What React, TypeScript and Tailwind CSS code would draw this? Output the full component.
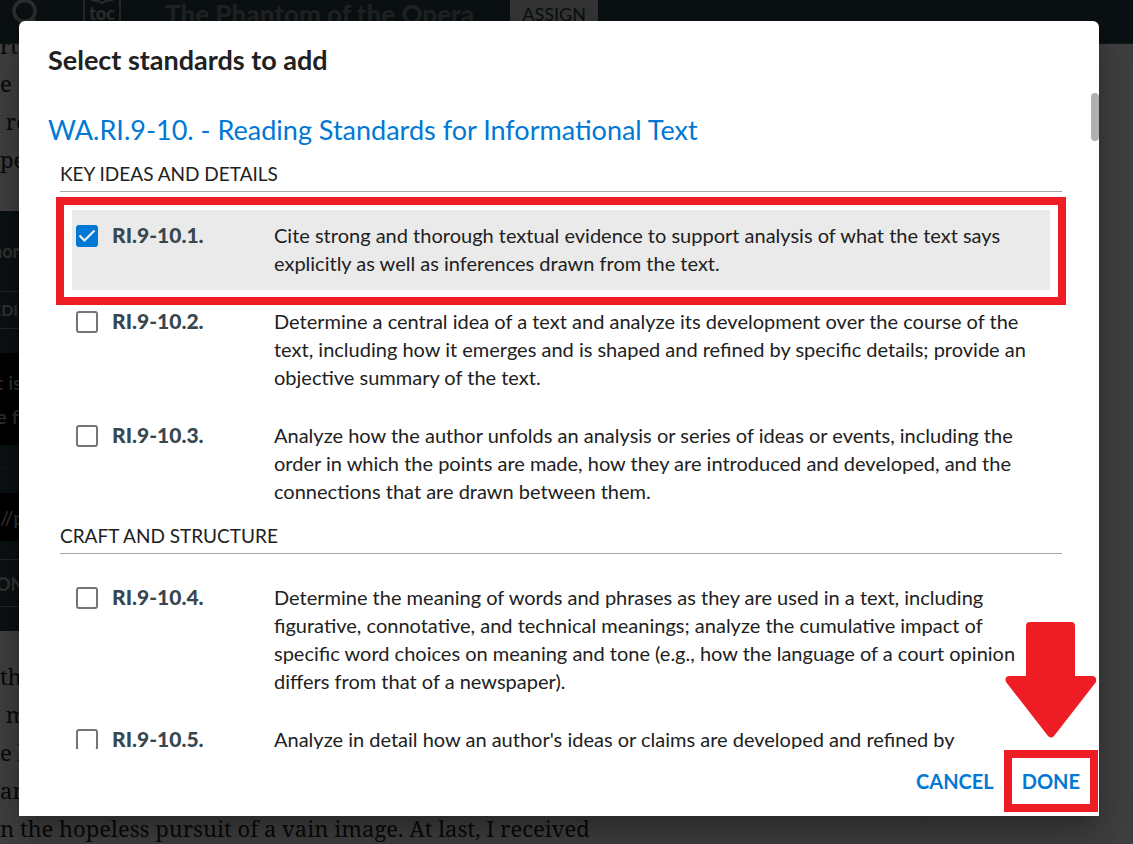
import React, { useState } from "react"

type Standard = {
  id: string
  text: string
}

type Section = {
  title: string
  standards: Standard[]
}

const sections: Section[] = [
  {
    title: "KEY IDEAS AND DETAILS",
    standards: [
      {
        id: "RI.9-10.1.",
        text: "Cite strong and thorough textual evidence to support analysis of what the text says explicitly as well as inferences drawn from the text.",
      },
      {
        id: "RI.9-10.2.",
        text: "Determine a central idea of a text and analyze its development over the course of the text, including how it emerges and is shaped and refined by specific details; provide an objective summary of the text.",
      },
      {
        id: "RI.9-10.3.",
        text: "Analyze how the author unfolds an analysis or series of ideas or events, including the order in which the points are made, how they are introduced and developed, and the connections that are drawn between them.",
      },
    ],
  },
  {
    title: "CRAFT AND STRUCTURE",
    standards: [
      {
        id: "RI.9-10.4.",
        text: "Determine the meaning of words and phrases as they are used in a text, including figurative, connotative, and technical meanings; analyze the cumulative impact of specific word choices on meaning and tone (e.g., how the language of a court opinion differs from that of a newspaper).",
      },
      {
        id: "RI.9-10.5.",
        text: "Analyze in detail how an author's ideas or claims are developed and refined by",
      },
    ],
  },
]

const ReaderPage: React.FC = () => (
  <div className="flex h-full flex-col bg-white">
    <header className="relative z-10 flex h-11 shrink-0 items-start border-b border-[#51626b] bg-[#2f424b] pl-[9px] text-[#b5b5b5]">
      <svg viewBox="0 0 30 30" className="h-[30px] w-[30px]" fill="none" stroke="currentColor" strokeWidth="3.5">
        <circle cx="15.5" cy="11" r="10.5" />
        <path d="M22 18l7 8" strokeWidth="4.5" />
      </svg>
      <div className="ml-11 flex h-7 w-[38px] flex-col items-center border-x-2 border-[#a0a0a0]">
        <svg viewBox="0 0 34 5" className="h-[5px] w-[34px] shrink-0" fill="none" stroke="currentColor" strokeWidth="2">
          <path d="M6 0c4 0 8 1 11 3c3-2 7-3 11-3" />
        </svg>
        <span className="text-lg leading-4 font-black">toc</span>
      </div>
      <h1 className="ml-11 text-[26px] leading-7 font-black text-[#808a8f]">The Phantom of the Opera</h1>
      <button className="ml-9 h-7 w-[88px] bg-[#d8d8d8] text-lg leading-7 font-medium text-[#37474f]">ASSIGN</button>
    </header>
    <main className="min-h-0 w-[923px] flex-1 overflow-hidden border-r border-gray-200 font-['Noto_Serif','Liberation_Serif',serif] text-[22px] leading-[38px] text-[#2b2b2b]">
      <p className="-mt-[18px]">
        rt
        <br />e of
        <br />
        &nbsp;re
        <br />
        pe
      </p>
      <section className="mt-[33px] bg-[#2f424b] font-['Lato',sans-serif] text-lg font-bold text-[#c8c8c8]">
        <p className="-ml-2 h-20 leading-20">nor</p>
        <p className="-ml-2 h-[38px] border-y border-[#a0a0a0] text-base leading-9">EDI</p>
        <div className="mt-6 h-[92px] bg-black pt-3 text-xl leading-[34px] font-medium">
          <p className="-ml-1">t is</p>
          <p className="-ml-1">e fi</p>
        </div>
        <div className="h-6 border-b border-[#455a64]" />
        <div className="mt-6 h-12 bg-black text-xl leading-12 font-medium">//p</div>
        <p className="-ml-1 mt-[18px] h-12 border-y border-[#a0a0a0] text-lg leading-12">ON</p>
        <div className="h-6" />
      </section>
      <p className="mt-[26px] whitespace-nowrap">
        th
        <br />
        &nbsp;me
        <br />e he
        <br />
        an
        <br />n the hopeless pursuit of a vain image. At last, I received
      </p>
    </main>
  </div>
)

const App: React.FC = () => {
  const [selected, setSelected] = useState<string[]>(["RI.9-10.1."])

  const toggle = (id: string) => {
    setSelected(selected.includes(id) ? selected.filter((s) => s !== id) : [...selected, id])
  }

  return (
    <div className="relative h-screen overflow-hidden font-['Lato','Liberation_Sans',sans-serif]">
      <ReaderPage />

      <div className="absolute inset-0 z-20 bg-black/75 pt-[21px] pr-[34px] pb-7 pl-[19px]">
        <div
          role="dialog"
          aria-labelledby="dialog-title"
          className="relative flex h-full flex-col rounded-t-md bg-white text-[#212121] shadow-[0_11px_15px_-7px_rgba(0,0,0,0.2),0_24px_38px_3px_rgba(0,0,0,0.14),0_9px_46px_8px_rgba(0,0,0,0.12)]"
        >
          <h2 id="dialog-title" className="h-[72px] shrink-0 px-[29px] pt-[23px] text-[27px] leading-8 font-bold">
            Select standards to add
          </h2>

          <div className="relative min-h-0 flex-1 overflow-hidden pt-[21px] pr-[37px] pl-[29px]">
            <div className="absolute top-0 right-0 h-12 w-2 rounded-full bg-[#b0b0b0]" />
            <h3 className="text-[27px] leading-8 text-[#0078d4]">
              WA.RI.9-10. - Reading Standards for Informational Text
            </h3>
            <div className="mt-4 flex flex-col gap-1.5 pl-3">
              {sections.map((section) => (
                <section key={section.title}>
                  <h4 className="mb-[18px] border-b border-[#a8a8a8] pb-[5px] text-[19px] leading-6">{section.title}</h4>
                  <div className="flex flex-col gap-1.5 px-3">
                    {section.standards.map((standard) => {
                      const checked = selected.includes(standard.id)
                      return (
                        <div
                          key={standard.id}
                          className={
                            checked
                              ? "relative grid grid-cols-[36px_162px_1fr] bg-[#eaeaea] pt-[11px] pb-[13px] pl-1"
                              : "relative grid grid-cols-[36px_162px_1fr] pt-[11px] pb-[13px] pl-1"
                          }
                        >
                          <span className="relative mt-1 h-[22px] w-[22px]">
                            <input
                              type="checkbox"
                              id={standard.id}
                              checked={checked}
                              onChange={() => toggle(standard.id)}
                              className="block h-full w-full appearance-none rounded-[3px] border-2 border-[#757575] checked:border-[#0078d4] checked:bg-[#0078d4]"
                            />
                            {checked && (
                              <svg viewBox="0 0 22 22" className="pointer-events-none absolute inset-0" fill="none" stroke="#f2f2f2" strokeWidth="2.2">
                                <path d="M3.5 10.5l5 5l10-10" />
                              </svg>
                            )}
                          </span>
                          <label htmlFor={standard.id} className="text-[21px] leading-7 font-black text-[#37474f]">
                            {standard.id}
                          </label>
                          <p className="text-xl leading-7">{standard.text}</p>
                          {standard.id === "RI.9-10.1." && (
                            <div className="pointer-events-none absolute -inset-x-4 -top-[13px] -bottom-[15px] border-8 border-[#ee1c24]" />
                          )}
                        </div>
                      )
                    })}
                  </div>
                </section>
              ))}
            </div>
          </div>

          <div className="relative flex h-[67px] shrink-0 items-center justify-end gap-3 pr-[11px] pb-[3px] text-xl font-bold text-[#0078d4]">
            <button className="px-2">CANCEL</button>
            <button className="relative px-2">
              DONE
              <span className="pointer-events-none absolute -inset-x-[10px] -inset-y-[17px] border-8 border-[#ee1c24]">
                <svg viewBox="0 0 92 116" className="absolute bottom-full left-1/2 mb-5 h-[116px] w-[92px] -translate-x-1/2" fill="#ee1c24">
                  <path d="M25 0H66Q70 0 70 4V54H87Q92 54 91 60L49 114Q46 117 43 114L1 60Q-1 54 5 54H21V4Q21 0 25 0Z" />
                </svg>
              </span>
            </button>
          </div>
        </div>
      </div>
    </div>
  )
}

export default App
